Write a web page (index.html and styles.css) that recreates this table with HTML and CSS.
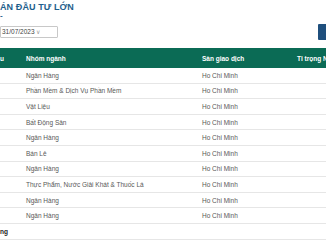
FILE: index.html
```html
<!DOCTYPE html>
<html lang="vi">
<head>
<meta charset="utf-8">
<link rel="stylesheet" href="styles.css">
</head>
<body>
<div class="page">
  <h1 class="title">ÁN ĐẦU TƯ LỚN</h1>
  <div class="dash">-</div>
  <div class="toolbar">
    <div class="select">31/07/2023 <span class="chev">∨</span></div>
    <div class="btn"></div>
  </div>
  <table class="grid">
    <thead>
      <tr><th class="c1">u</th><th class="c2">Nhóm ngành</th><th class="c3">Sàn giao dịch</th><th class="c4">Tỉ trọng NAV</th></tr>
    </thead>
    <tbody>
      <tr><td></td><td>Ngân Hàng</td><td>Ho Chi Minh</td><td></td></tr>
      <tr><td></td><td>Phần Mềm &amp; Dịch Vụ Phần Mềm</td><td>Ho Chi Minh</td><td></td></tr>
      <tr><td></td><td>Vật Liệu</td><td>Ho Chi Minh</td><td></td></tr>
      <tr><td></td><td>Bất Động Sản</td><td>Ho Chi Minh</td><td></td></tr>
      <tr><td></td><td>Ngân Hàng</td><td>Ho Chi Minh</td><td></td></tr>
      <tr><td></td><td>Bán Lẻ</td><td>Ho Chi Minh</td><td></td></tr>
      <tr><td></td><td>Ngân Hàng</td><td>Ho Chi Minh</td><td></td></tr>
      <tr><td></td><td>Thực Phẩm, Nước Giải Khát &amp; Thuốc Lá</td><td>Ho Chi Minh</td><td></td></tr>
      <tr><td></td><td>Ngân Hàng</td><td>Ho Chi Minh</td><td></td></tr>
      <tr><td></td><td>Ngân Hàng</td><td>Ho Chi Minh</td><td></td></tr>
      <tr class="total"><td colspan="2">ng</td><td></td><td></td></tr>
    </tbody>
  </table>
</div>
</body>
</html>
```
FILE: styles.css
```css
html, body {
  margin: 0;
  padding: 0;
  background: #fff;
  overflow: hidden;
}
body {
  font-family: "Liberation Sans", Arial, sans-serif;
  width: 326px;
  height: 245px;
}
.page {
  width: 420px;
}
.title {
  margin: 2px 0 0 0;
  font-size: 9px;
  line-height: 11px;
  font-weight: bold;
  color: #1d5e8c;
  letter-spacing: 0.1px;
}
.dash {
  font-size: 8px;
  line-height: 6px;
  height: 6px;
  color: #1d5e8c;
  font-weight: bold;
}
.toolbar {
  display: flex;
  align-items: flex-start;
  width: 326px;
  margin-top: 5px;
  height: 24px;
}
.select {
  margin-top: 2px;
  height: 10px;
  width: 55px;
  border: 1px solid #c8c8c8;
  border-radius: 1px;
  font-size: 6.5px;
  line-height: 10px;
  color: #444;
  padding-left: 1px;
  box-sizing: content-box;
}
.chev {
  color: #999;
  font-size: 5.5px;
}
.btn {
  margin-left: auto;
  width: 8px;
  height: 16px;
  background: #1f4f7d;
  border-radius: 1px 0 0 1px;
}
.grid {
  border-collapse: collapse;
  table-layout: fixed;
  width: 420px;
  font-size: 6.5px;
}
.grid th {
  background: #0b6b55;
  color: #fff;
  font-weight: bold;
  text-align: left;
  height: 20px;
  padding: 0;
}
.grid .c1 { width: 26px; }
.grid .c2 { width: 176px; }
.grid .c3 { width: 95px; }
.grid .c4 { width: 123px; }
.grid td {
  height: 14.6px;
  padding: 0;
  color: #585858;
  border-bottom: 1px solid #e6e6e6;
  white-space: nowrap;
}
.grid tr.total td {
  font-weight: bold;
  color: #222;
}
```
